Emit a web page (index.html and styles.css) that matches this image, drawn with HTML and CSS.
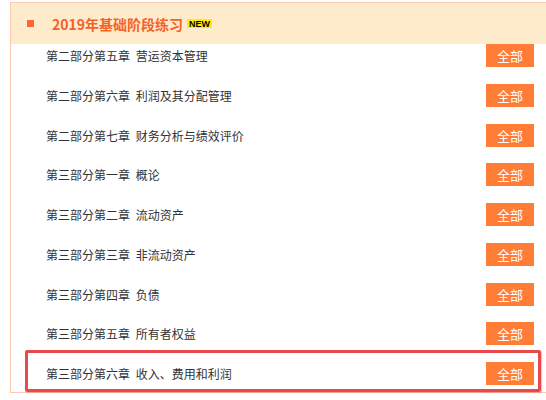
FILE: index.html
```html
<!DOCTYPE html>
<html lang="zh-CN">
<head>
    <meta charset="UTF-8">
    <title>2019年基础阶段练习</title>
    <link rel="stylesheet" href="styles.css">
</head>
<body>
    <div class="box">
        <div class="box-head">
            <span class="dot"></span>
            <h2 class="title">2019年基础阶段练习</h2>
            <span class="new">NEW</span>
        </div>
        <ul class="chapters">
            <li class="chapter"><span class="name">第二部分第五章 营运资本管理</span><a class="all-btn" href="#">全部</a></li>
            <li class="chapter"><span class="name">第二部分第六章 利润及其分配管理</span><a class="all-btn" href="#">全部</a></li>
            <li class="chapter"><span class="name">第二部分第七章 财务分析与绩效评价</span><a class="all-btn" href="#">全部</a></li>
            <li class="chapter"><span class="name">第三部分第一章 概论</span><a class="all-btn" href="#">全部</a></li>
            <li class="chapter"><span class="name">第三部分第二章 流动资产</span><a class="all-btn" href="#">全部</a></li>
            <li class="chapter"><span class="name">第三部分第三章 非流动资产</span><a class="all-btn" href="#">全部</a></li>
            <li class="chapter"><span class="name">第三部分第四章 负债</span><a class="all-btn" href="#">全部</a></li>
            <li class="chapter"><span class="name">第三部分第五章 所有者权益</span><a class="all-btn" href="#">全部</a></li>
            <li class="chapter marked"><span class="name">第三部分第六章 收入、费用和利润</span><a class="all-btn" href="#">全部</a></li>
        </ul>
    </div>
</body>
</html>
```

FILE: styles.css
```css
body {
    margin: 0;
    overflow: hidden;
    font-family: "Noto Sans CJK SC", "Liberation Sans", sans-serif;
    color: #333;
}
.box {
    width: 536px;
    margin: 2px 0 0 10px;
    border: 1px solid #fdcab0;
}
.box-head {
    display: flex;
    align-items: center;
    height: 41px;
    padding-left: 16px;
    background-color: #feebcb;
}
.dot {
    width: 7px;
    height: 7px;
    background-color: #ff6633;
}
.title {
    margin: 0 0 0 18px;
    font-size: 14px;
    font-weight: bold;
    color: #f4622a;
}
.new {
    margin-left: 4px;
    padding: 0 2px;
    height: 9px;
    line-height: 10px;
    font-family: "Liberation Sans", sans-serif;
    font-size: 9px;
    font-weight: bold;
    color: #000;
    background-color: #ffee00;
}
.chapters {
    list-style: none;
    margin: 0;
    padding: 0 13px 7px 35px;
}
.chapter {
    display: flex;
    align-items: center;
    height: 23px;
    margin-bottom: 16.75px;
    font-size: 12px;
    word-spacing: 3px;
}
.chapter:last-child {
    margin-bottom: 0;
}
.all-btn {
    margin-left: auto;
    width: 48px;
    height: 23px;
    line-height: 23px;
    text-align: center;
    font-size: 13px;
    color: #fff;
    text-decoration: none;
    background-color: #ff7d36;
}
.marked {
    position: relative;
}
.marked::after {
    content: "";
    position: absolute;
    top: -12px;
    bottom: -7px;
    left: -21px;
    right: -7px;
    border: 3px solid #e84a4c;
    border-radius: 2px;
    box-shadow: 1px 1px 1px rgba(232, 74, 76, 0.4);
}
```
